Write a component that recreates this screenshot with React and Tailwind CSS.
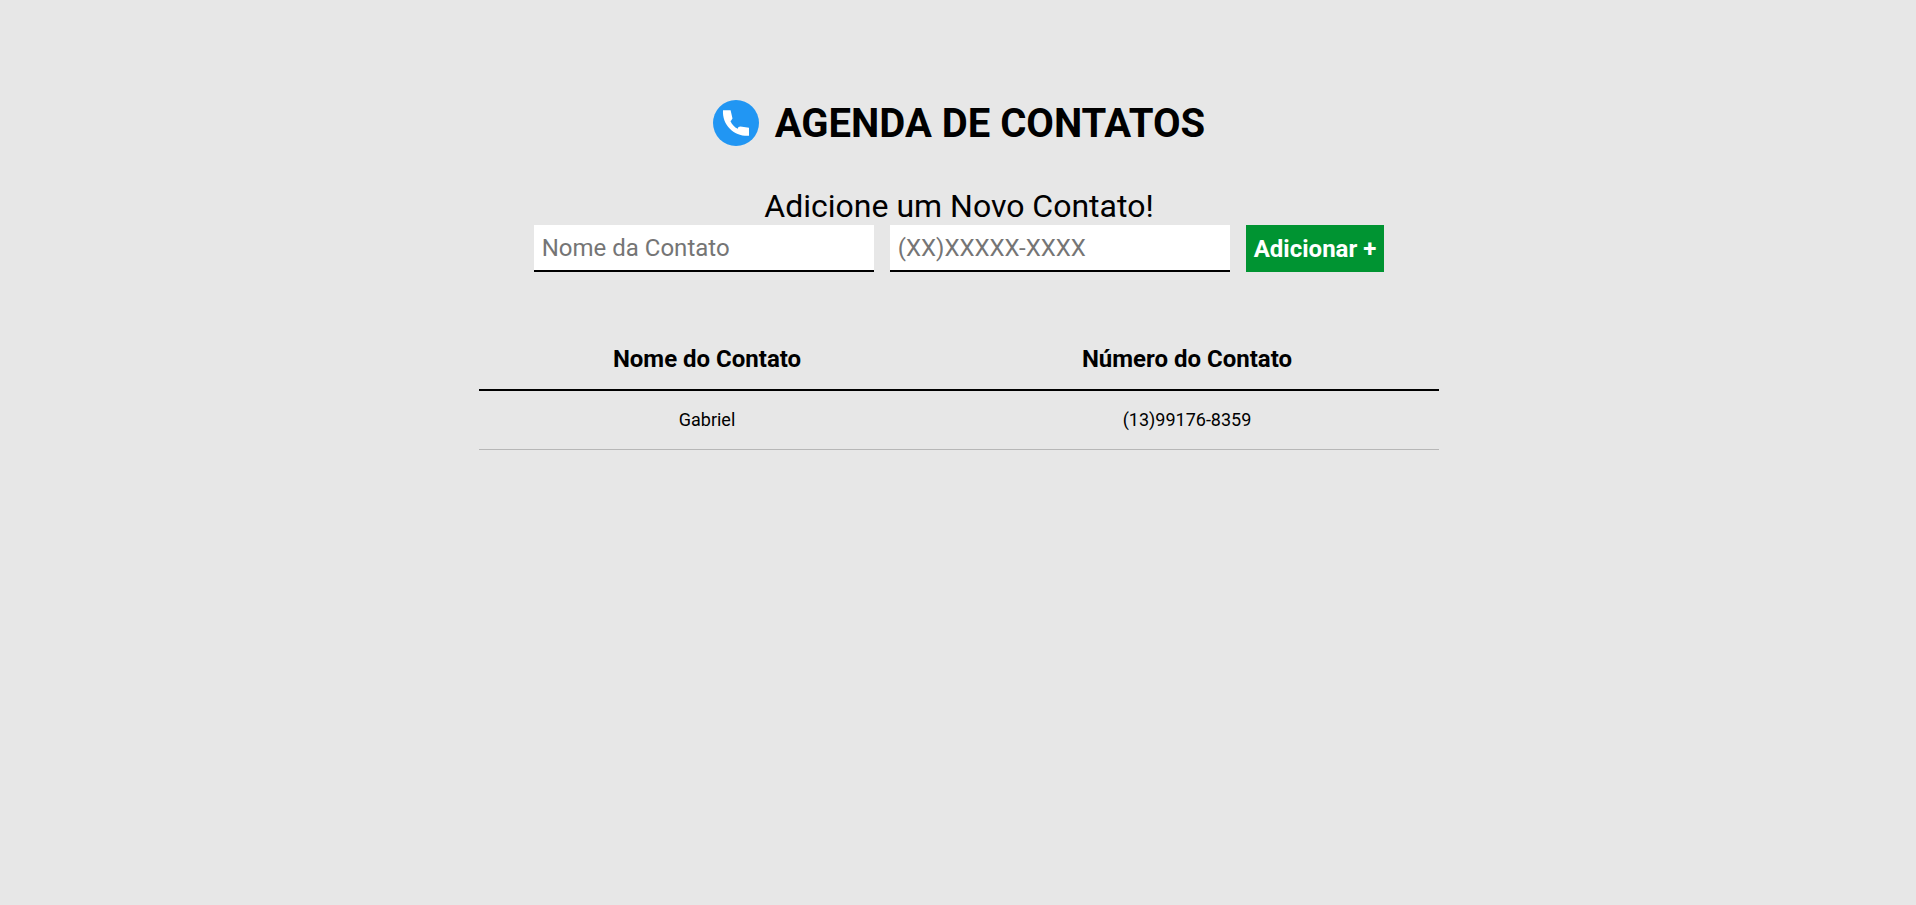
import { useState } from "react";

const inputClass =
  "h-[47px] w-[340px] max-w-full border-b-2 border-black bg-white px-2 text-2xl text-black outline-none placeholder:text-[#757575]";
const headClass = "py-[15px] pr-6 text-2xl leading-[30px] font-bold";
const cellClass = "py-[15px] pr-6 text-lg leading-7";

function PhoneLogo() {
  return (
    <svg viewBox="0 0 46 46" className="size-[46px] shrink-0" aria-hidden="true">
      <circle cx="23" cy="23" r="23" fill="#2196f3" />
      <path
        fill="#fff"
        d="M10 10.2h7.6l1.9 8.4-1.5 2.2-.6.2c1.5 3.5 4 6.200 7.400 7.800l.6-1.800 2-.4 8.600 1.200v8C21.500 36.600 9 25.500 10 10.2Z"
      />
    </svg>
  );
}

export default function App() {
  const [contacts, setContacts] = useState([
    { name: "Gabriel", phone: "(13)99176-8359" },
  ]);
  const [name, setName] = useState("");
  const [phone, setPhone] = useState("");

  function addContact(event) {
    event.preventDefault();
    if (!name || !phone) return;
    setContacts([...contacts, { name, phone }]);
    setName("");
    setPhone("");
  }

  return (
    <div className="min-h-screen bg-[#e7e7e7] pt-[100px] pl-0.5 font-['Roboto',sans-serif] text-black">
      <header className="flex items-start justify-center gap-4">
        <PhoneLogo />
        <h1 className="text-[40px] leading-[48px] font-bold">AGENDA DE CONTATOS</h1>
      </header>

      <main>
        <form onSubmit={addContact} className="mt-[39px]">
          <h2 className="text-center text-[32px] leading-[38px]">Adicione um Novo Contato!</h2>
          <div className="flex flex-wrap justify-center gap-4">
            <input
              className={inputClass}
              type="text"
              aria-label="Nome do contato"
              placeholder="Nome da Contato"
              value={name}
              onChange={(e) => setName(e.target.value)}
            />
            <input
              className={inputClass}
              type="tel"
              aria-label="Número do contato"
              placeholder="(XX)XXXXX-XXXX"
              value={phone}
              onChange={(e) => setPhone(e.target.value)}
            />
            <button type="submit" className="cursor-pointer bg-[#009432] px-2 text-2xl font-bold text-white">
              Adicionar +
            </button>
          </div>
        </form>

        <table className="mx-auto mt-[57px] w-full max-w-[960px] table-fixed border-collapse text-center">
          <thead>
            <tr className="border-b-2 border-black">
              <th scope="col" className={headClass}>Nome do Contato</th>
              <th scope="col" className={headClass}>Número do Contato</th>
            </tr>
          </thead>
          <tbody>
            {contacts.map((contact, index) => (
              <tr key={index} className="border-b border-[#b7b7b7]">
                <td className={cellClass}>{contact.name}</td>
                <td className={cellClass}>{contact.phone}</td>
              </tr>
            ))}
          </tbody>
        </table>
      </main>
    </div>
  );
}
